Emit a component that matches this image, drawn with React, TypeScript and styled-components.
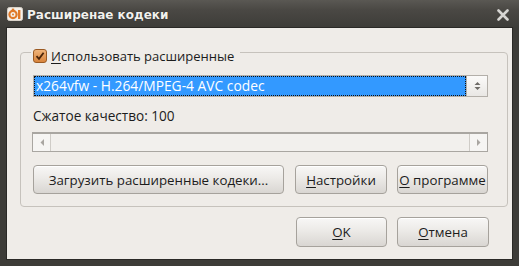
import React from "react";
import styled, { createGlobalStyle } from "styled-components";

const Global = createGlobalStyle`
  html, body { margin: 0; padding: 0; background: #3c3b37; }
  body { font-family: "Open Sans", "Noto Sans", sans-serif; }
`;

const Window = styled.div`
  width: 519px;
  height: 266px;
  display: flex;
  flex-direction: column;
  background: #3d3c38;
  box-sizing: border-box;
`;

const TitleBar = styled.div`
  height: 28px;
  flex: none;
  display: flex;
  align-items: center;
  padding: 0 10px 0 7px;
  background: linear-gradient(#5a5853 0%, #4a4844 35%, #3d3c38 100%);
  color: #f2f1ee;
`;

const TitleText = styled.span`
  font-family: "DejaVu Sans", sans-serif;
  font-weight: bold;
  font-size: 12px;
  margin-left: 4px;
  margin-top: 2px;
  flex: 1;
  text-shadow: 0 0 1px rgba(0, 0, 0, 0.6);
`;

const CloseBtn = styled.span`
  display: flex;
  width: 12px;
  height: 12px;
  margin-top: 1px;
`;

const Content = styled.div`
  flex: 1;
  margin: 0 7px 7px 7px;
  background: #efece8;
  box-shadow: 0 0 0 1px #2a2926;
  display: flex;
  flex-direction: column;
  padding: 24px 4px 12px 13px;
  font-size: 13px;
  color: #1c1c1c;
`;

const Group = styled.div`
  border: 1px solid #c6c2bc;
  border-radius: 4px;
  padding: 0 19px 12px 12px;
  display: flex;
  flex-direction: column;
`;

const Legend = styled.label`
  align-self: flex-start;
  margin: -5px 0 0 -2px;
  padding: 0 6px 0 2px;
  height: 16px;
  line-height: 16px;
  display: flex;
  align-items: center;
  gap: 4px;
  background: #efece8;
`;

const CheckBox = styled.span`
  width: 14px;
  height: 14px;
  box-sizing: border-box;
  border: 1px solid #9b5a22;
  border-radius: 3px;
  background: linear-gradient(#f0b479, #d8843c);
  display: flex;
  align-items: center;
  justify-content: center;
`;

const Mn = styled.span`
  text-decoration: underline;
  text-underline-offset: 2px;
`;

const Combo = styled.div`
  margin-top: 11px;
  height: 22px;
  display: flex;
`;

const ComboField = styled.div`
  flex: 1;
  display: flex;
  border: 1px solid #b3afa9;
  border-right: none;
  background: #3399ff;
`;

const Selected = styled.div`
  flex: 1;
  border: 1px dotted #111;
  background: #3399ff;
  color: #fff;
  font-size: 13.8px;
  line-height: 18px;
  padding-left: 1px;
  white-space: nowrap;
  overflow: hidden;
`;

const ComboArrow = styled.div`
  width: 20px;
  border: 1px solid #b3afa9;
  background: linear-gradient(#fbfaf9, #e9e7e4);
  display: flex;
  align-items: center;
  justify-content: center;
`;

const Label = styled.div`
  margin-top: 11px;
  font-size: 13.6px;
  line-height: 16px;
  height: 16px;
`;

const ScrollBar = styled.div`
  margin: 8px 0 0 -1px;
  height: 20px;
  box-sizing: border-box;
  border: 1px solid #a9a6a1;
  border-top-width: 2px;
  background: #f2f0ed;
  display: flex;
`;

const ScrollBtn = styled.div<{ $side: "left" | "right" }>`
  width: 17px;
  background: #f6f5f3;
  display: flex;
  align-items: center;
  justify-content: center;
  ${(p) => (p.$side === "left" ? "border-right: 1px solid #cfccc7;" : "border-left: 1px solid #cfccc7;")}
`;

const Track = styled.div`
  flex: 1;
`;

const Row = styled.div<{ $top: number; $padRight?: number }>`
  margin-top: ${(p) => p.$top}px;
  display: flex;
  justify-content: flex-end;
  gap: 10px;
  padding-right: ${(p) => p.$padRight ?? 0}px;
`;

const Button = styled.button<{ $w?: number; $h: number }>`
  font-family: "Open Sans", "Noto Sans", sans-serif;
  font-size: 13.3px;
  color: #1c1c1c;
  height: ${(p) => p.$h}px;
  ${(p) => (p.$w ? `width: ${p.$w}px;` : "flex: 1;")}
  padding: 0 2px;
  box-sizing: border-box;
  border: 1px solid #a6a29c;
  border-radius: 4px;
  background: linear-gradient(#f8f7f6 0%, #eceae7 45%, #d9d6d2 100%);
  box-shadow: inset 0 1px 0 #fff;
  display: flex;
  align-items: center;
  justify-content: center;
  white-space: nowrap;
`;

function AppIcon() {
  return (
    <svg width="16" height="14" viewBox="0 0 16 14">
      <rect x="0.5" y="0.5" width="15" height="13" rx="2" fill="#f4f1ec" stroke="#d9d2c8" />
      <circle cx="6" cy="7.5" r="3.6" fill="none" stroke="#e07a2a" strokeWidth="2.2" />
      <circle cx="6" cy="7.5" r="1" fill="#e07a2a" />
      <rect x="11" y="3" width="2.4" height="9" fill="#e07a2a" />
      <rect x="4.8" y="1.6" width="2.4" height="1.8" fill="#e07a2a" />
    </svg>
  );
}

export default function App() {
  return (
    <>
      <Global />
      <Window>
        <TitleBar>
          <AppIcon />
          <TitleText>Расширенае кодеки</TitleText>
          <CloseBtn>
            <svg width="12" height="12" viewBox="0 0 12 12">
              <path d="M1.5 1.5 L10.5 10.5 M10.5 1.5 L1.5 10.5" stroke="#d6d5d2" strokeWidth="2.6" strokeLinecap="round" />
            </svg>
          </CloseBtn>
        </TitleBar>
        <Content>
          <Group>
            <Legend>
              <CheckBox>
                <svg width="10" height="10" viewBox="0 0 10 10">
                  <path d="M1.5 5.2 L4 7.8 L8.6 1.8" fill="none" stroke="#4a2408" strokeWidth="1.8" />
                </svg>
              </CheckBox>
              <span>
                <Mn>И</Mn>спользовать расширенные
              </span>
            </Legend>
            <Combo>
              <ComboField>
                <Selected>x264vfw - H.264/MPEG-4 AVC codec</Selected>
              </ComboField>
              <ComboArrow>
                <svg width="7" height="10" viewBox="0 0 7 10">
                  <path d="M0.5 4 L3.5 1 L6.5 4 Z M0.5 6 L3.5 9 L6.5 6 Z" fill="#6e6b67" />
                </svg>
              </ComboArrow>
            </Combo>
            <Label>Сжатое качество: 100</Label>
            <ScrollBar>
              <ScrollBtn $side="left">
                <svg width="4" height="7" viewBox="0 0 4 7">
                  <path d="M4 0 L0.5 3.5 L4 7 Z" fill="#a9a6a1" />
                </svg>
              </ScrollBtn>
              <Track />
              <ScrollBtn $side="right">
                <svg width="4" height="7" viewBox="0 0 4 7">
                  <path d="M0 0 L3.5 3.5 L0 7 Z" fill="#a9a6a1" />
                </svg>
              </ScrollBtn>
            </ScrollBar>
            <Row $top={13}>
              <Button $h={29}>Загрузить расширенные кодеки...</Button>
              <Button $h={29} $w={92} style={{ marginLeft: 1 }}>
                <Mn>Н</Mn>астройки
              </Button>
              <Button $h={29} $w={91}>
                <Mn>О</Mn>&nbsp;программе
              </Button>
            </Row>
          </Group>
          <Row $top={10} $padRight={19}>
            <Button $h={30} $w={91}>
              <Mn>О</Mn>K
            </Button>
            <Button $h={30} $w={92}>
              <Mn>О</Mn>тмена
            </Button>
          </Row>
        </Content>
      </Window>
    </>
  );
}
